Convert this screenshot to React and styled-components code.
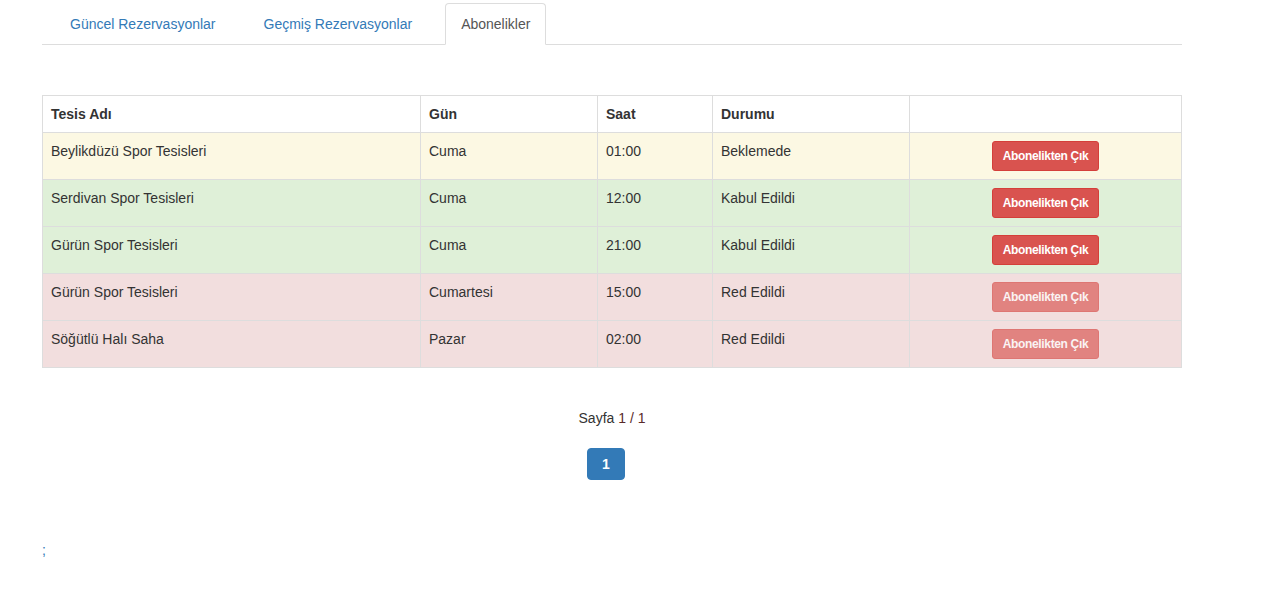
import React from 'react'
import styled, { createGlobalStyle } from 'styled-components'

const GlobalStyle = createGlobalStyle`
  * { box-sizing: border-box; }
  body {
    margin: 0;
    background: #fff;
    color: #333;
    font-family: "Liberation Sans", Arial, sans-serif;
    font-size: 14px;
    line-height: 20px;
  }
`

const rows = [
  { name: 'Beylikdüzü Spor Tesisleri', day: 'Cuma', time: '01:00', status: 'Beklemede', tone: 'warning' },
  { name: 'Serdivan Spor Tesisleri', day: 'Cuma', time: '12:00', status: 'Kabul Edildi', tone: 'success' },
  { name: 'Gürün Spor Tesisleri', day: 'Cuma', time: '21:00', status: 'Kabul Edildi', tone: 'success' },
  { name: 'Gürün Spor Tesisleri', day: 'Cumartesi', time: '15:00', status: 'Red Edildi', tone: 'danger' },
  { name: 'Söğütlü Halı Saha', day: 'Pazar', time: '02:00', status: 'Red Edildi', tone: 'danger' },
]

const tones = {
  warning: '#fcf8e3',
  success: '#dff0d8',
  danger: '#f2dede',
}

const App = () => {
  return (
    <StyledPage>
      <GlobalStyle />
      <StyledTabs>
        <StyledTab>Güncel Rezervasyonlar</StyledTab>
        <StyledTab>Geçmiş Rezervasyonlar</StyledTab>
        <StyledTab $active>Abonelikler</StyledTab>
      </StyledTabs>

      <StyledTable>
        <colgroup>
          <col style={{ width: 378 }} />
          <col style={{ width: 177 }} />
          <col style={{ width: 115 }} />
          <col style={{ width: 197 }} />
          <col />
        </colgroup>
        <thead>
          <tr>
            <StyledTh>Tesis Adı</StyledTh>
            <StyledTh>Gün</StyledTh>
            <StyledTh>Saat</StyledTh>
            <StyledTh>Durumu</StyledTh>
            <StyledTh></StyledTh>
          </tr>
        </thead>
        <tbody>
          {rows.map((row, i) => (
            <StyledRow key={i} $tone={row.tone}>
              <StyledTd>{row.name}</StyledTd>
              <StyledTd>{row.day}</StyledTd>
              <StyledTd>{row.time}</StyledTd>
              <StyledTd>{row.status}</StyledTd>
              <StyledTd $center>
                <StyledBtn disabled={row.tone === 'danger'}>Abonelikten Çık</StyledBtn>
              </StyledTd>
            </StyledRow>
          ))}
        </tbody>
      </StyledTable>

      <StyledPager>
        <p>Sayfa <StyledNum>1 / 1</StyledNum></p>
        <StyledPageBtn>1</StyledPageBtn>
      </StyledPager>

      <StyledFoot>;</StyledFoot>
    </StyledPage>
  )
}

const StyledPage = styled.div`
  width: 1182px;
  padding-left: 42px;
  padding-top: 3px;
`

const StyledTabs = styled.ul`
  display: flex;
  gap: 16px;
  list-style: none;
  margin: 0;
  padding: 0 0 0 12px;
  border-bottom: 1px solid #ddd;
`

const StyledTab = styled.li`
  margin-bottom: -1px;
  margin-left: ${p => (p.$active ? '1px' : '0')};
  padding: 10px 15px;
  border: 1px solid ${p => (p.$active ? '#ddd' : 'transparent')};
  border-bottom-color: ${p => (p.$active ? '#fff' : 'transparent')};
  border-radius: 4px 4px 0 0;
  background: ${p => (p.$active ? '#fff' : 'transparent')};
  color: ${p => (p.$active ? '#555' : '#337ab7')};
  cursor: pointer;
`

const StyledTable = styled.table`
  width: 1140px;
  margin-top: 50px;
  border-collapse: collapse;
  table-layout: fixed;
  border: 1px solid #ddd;
`

const StyledTh = styled.th`
  padding: 8px;
  border: 1px solid #ddd;
  text-align: left;
  font-weight: bold;
  line-height: 20px;
`

const StyledRow = styled.tr`
  background: ${p => tones[p.$tone]};
`

const StyledTd = styled.td`
  padding: 8px;
  height: 47px;
  border: 1px solid #ddd;
  vertical-align: top;
  text-align: ${p => (p.$center ? 'center' : 'left')};
`

const StyledBtn = styled.button`
  display: inline-block;
  padding: 5px 10px;
  font-family: "Liberation Sans", Arial, sans-serif;
  font-size: 12px;
  font-weight: bold;
  letter-spacing: -0.35px;
  line-height: 18px;
  color: #fff;
  background: #d9534f;
  border: 1px solid #d43f3a;
  border-radius: 3px;
  cursor: pointer;

  &:disabled {
    opacity: 0.65;
    cursor: not-allowed;
  }
`

const StyledPager = styled.div`
  width: 1140px;
  margin-top: 40px;
  display: flex;
  flex-direction: column;
  align-items: center;
  gap: 20px;

  p {
    margin: 0;
  }
`

const StyledNum = styled.span`
  color: #5a2b2b;
`

const StyledPageBtn = styled.button`
  width: 38px;
  height: 32px;
  margin-right: 12px;
  border: 1px solid #337ab7;
  border-radius: 4px;
  background: #337ab7;
  color: #fff;
  font-family: "Liberation Sans", Arial, sans-serif;
  font-size: 14px;
  font-weight: bold;
  cursor: pointer;
`

const StyledFoot = styled.div`
  margin-top: 60px;
  color: #337ab7;
`

export default App
